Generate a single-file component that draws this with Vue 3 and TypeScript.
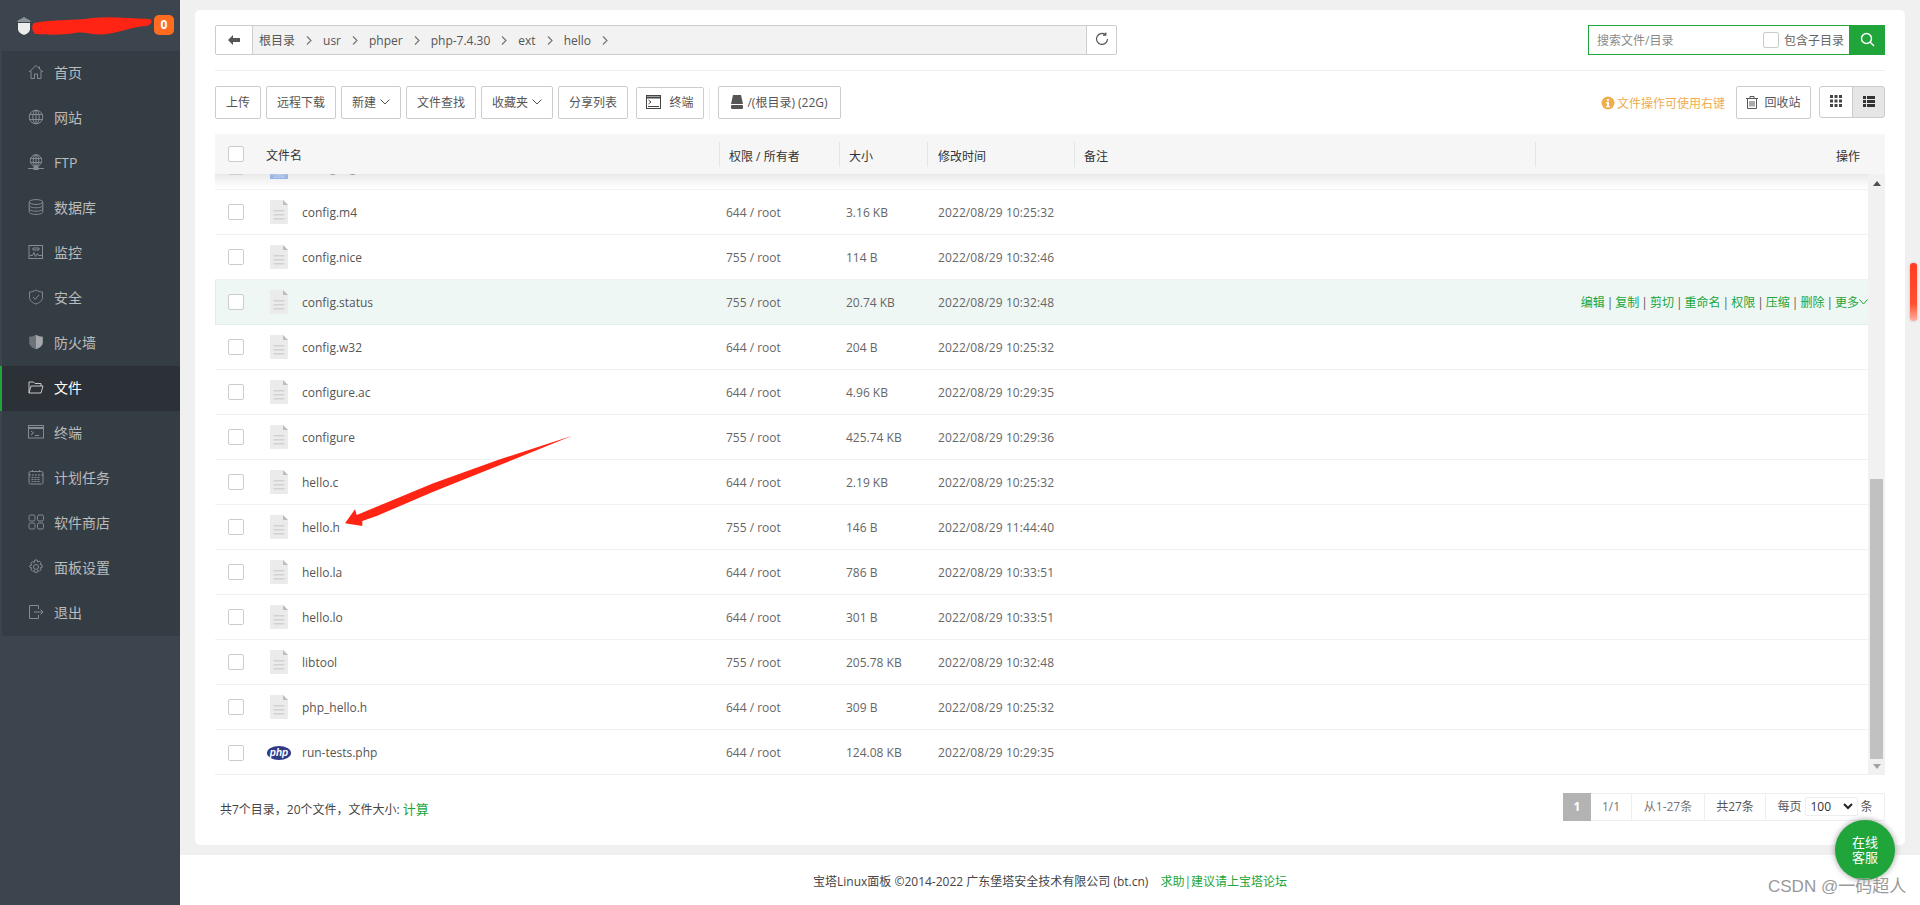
<script setup lang="ts">
interface FileRow {
  name: string
  perm: string
  size: string
  time: string
  kind?: 'log' | 'php'
  hover?: boolean
}

const navItems = [
  { label: '首页', icon: 'home' },
  { label: '网站', icon: 'globe' },
  { label: 'FTP', icon: 'ftp' },
  { label: '数据库', icon: 'db' },
  { label: '监控', icon: 'monitor' },
  { label: '安全', icon: 'shield' },
  { label: '防火墙', icon: 'wall' },
  { label: '文件', icon: 'folder', active: true },
  { label: '终端', icon: 'term' },
  { label: '计划任务', icon: 'cal' },
  { label: '软件商店', icon: 'apps' },
  { label: '面板设置', icon: 'gear' },
  { label: '退出', icon: 'exit' },
]

const crumbs = ['根目录', 'usr', 'phper', 'php-7.4.30', 'ext', 'hello']

const files: FileRow[] = [
  { name: 'config.log', perm: '', size: '', time: '', kind: 'log' },
  { name: 'config.m4', perm: '644 / root', size: '3.16 KB', time: '2022/08/29 10:25:32' },
  { name: 'config.nice', perm: '755 / root', size: '114 B', time: '2022/08/29 10:32:46' },
  { name: 'config.status', perm: '755 / root', size: '20.74 KB', time: '2022/08/29 10:32:48', hover: true },
  { name: 'config.w32', perm: '644 / root', size: '204 B', time: '2022/08/29 10:25:32' },
  { name: 'configure.ac', perm: '644 / root', size: '4.96 KB', time: '2022/08/29 10:29:35' },
  { name: 'configure', perm: '755 / root', size: '425.74 KB', time: '2022/08/29 10:29:36' },
  { name: 'hello.c', perm: '644 / root', size: '2.19 KB', time: '2022/08/29 10:25:32' },
  { name: 'hello.h', perm: '755 / root', size: '146 B', time: '2022/08/29 11:44:40' },
  { name: 'hello.la', perm: '644 / root', size: '786 B', time: '2022/08/29 10:33:51' },
  { name: 'hello.lo', perm: '644 / root', size: '301 B', time: '2022/08/29 10:33:51' },
  { name: 'libtool', perm: '755 / root', size: '205.78 KB', time: '2022/08/29 10:32:48' },
  { name: 'php_hello.h', perm: '644 / root', size: '309 B', time: '2022/08/29 10:25:32' },
  { name: 'run-tests.php', perm: '644 / root', size: '124.08 KB', time: '2022/08/29 10:29:35', kind: 'php' },
]

const rowActions = ['编辑', '复制', '剪切', '重命名', '权限', '压缩', '删除']
</script>

<template>
  <div class="page">
    <aside class="sidebar">
      <div class="brand">
        <svg class="logo" width="20" height="20" viewBox="0 0 20 20">
          <path d="M3 5 10 1l7 4-1 1H4z" fill="#8d9298" />
          <path d="M4 7h12v6c0 3-3 5-6 6-3-1-6-3-6-6z" fill="#eceded" />
        </svg>
        <svg class="scribble" width="122" height="20" viewBox="0 0 122 20">
          <path
            d="M2 7C20 3 42 5 60 2c16-2 36 0 58 1 3 2 2 5-3 7-18 1-24 6-40 8-14 2-22-3-32-1-12 2-24 2-40 1-3-3-4-8-1-11z"
            fill="#ff2413"
          />
        </svg>
        <span class="badge">0</span>
      </div>
      <nav class="nav">
        <a v-for="item in navItems" :key="item.label" class="nav-item" :class="{ active: item.active }">
          <svg class="nav-icon" width="16" height="16" viewBox="0 0 16 16" fill="none" stroke="currentColor" stroke-width="1">
            <template v-if="item.icon === 'home'">
              <path d="M1 8 8 1.5 15 8M3 7v7.5h3.5V10h3v4.5H13V7M11.5 2.5V5" />
            </template>
            <template v-else-if="item.icon === 'globe'">
              <circle cx="8" cy="8" r="6.8" />
              <ellipse cx="8" cy="8" rx="3.2" ry="6.8" />
              <path d="M8 1v14M1.5 5.5h13M1.5 10.5h13" />
            </template>
            <template v-else-if="item.icon === 'ftp'">
              <circle cx="8" cy="6.5" r="5.8" />
              <ellipse cx="8" cy="6.5" rx="2.8" ry="5.8" />
              <path d="M8 1v11M2.5 4.5h11M2.5 8.5h11M0 14.5h16" />
              <rect x="6" y="12.5" width="4" height="3" fill="currentColor" />
            </template>
            <template v-else-if="item.icon === 'db'">
              <ellipse cx="8" cy="3" rx="6.8" ry="2.4" />
              <path d="M1.2 3v10c0 1.4 3 2.4 6.8 2.4s6.8-1 6.8-2.4V3M1.2 6.4c0 1.4 3 2.4 6.8 2.4s6.8-1 6.8-2.4M1.2 9.8c0 1.4 3 2.4 6.8 2.4s6.8-1 6.8-2.4" />
            </template>
            <template v-else-if="item.icon === 'monitor'">
              <rect x="1" y="1.5" width="13.5" height="13" />
              <path d="M2 11.5h2.5l1.5-3 1.5 4 2-3 1 2H14M5 4h6v2H5z" />
            </template>
            <template v-else-if="item.icon === 'shield'">
              <path d="M8 1c2 1.2 4 1.8 6.5 2v5.500c0 3-3 5.500-6.500 6.500-3.500-1-6.500-3.500-6.500-6.500V3C4 2.800 6 2.200 8 1z" />
              <path d="M5 8l2.200 2.300L11.200 5.800" />
            </template>
            <template v-else-if="item.icon === 'wall'">
              <path d="M8 .8c2 1.200 4.200 1.800 6.800 2v5.700c0 3.200-3.200 5.500-6.800 6.700z" fill="#a5a9ad" stroke="none" />
              <path d="M8 .8c-2 1.200-4.200 1.800-6.800 2v5.700c0 3.200 3.200 5.500 6.800 6.700z" fill="#6d7378" stroke="none" />
            </template>
            <template v-else-if="item.icon === 'folder'">
              <path d="M1 14V3h4.500l1.500 1.500h6V7M1 14h12l2-7H3z" />
            </template>
            <template v-else-if="item.icon === 'term'">
              <rect x=".5" y="1.500" width="15" height="12.500" />
              <path d="M.5 4h15" stroke-width="2" />
              <path d="M3 7l2.500 2L3 11M7 11.500h4" />
            </template>
            <template v-else-if="item.icon === 'cal'">
              <rect x="1" y="2.500" width="14" height="12.500" rx="1.500" />
              <path d="M1 6h14M4.500 1v3M11.500 1v3M3.500 8.500h9M3.500 10.500h9M3.500 12.500h9" stroke-dasharray="2 1" />
            </template>
            <template v-else-if="item.icon === 'apps'">
              <rect x="1" y="1" width="6" height="6" rx="1.500" />
              <rect x="9.500" y="1" width="6" height="6" rx="1.500" />
              <rect x="1" y="9" width="6" height="6" rx="1.500" />
              <rect x="9.500" y="9" width="6" height="6" rx="1.500" />
            </template>
            <template v-else-if="item.icon === 'gear'">
              <circle cx="8" cy="8" r="2.500" />
              <path d="M6.800 1h2.400l.5 2 1.700-.9 1.700 1.700-1 1.700 2 .5v2.400l-2 .5 1 1.700-1.700 1.700-1.700-1-.5 2.100H6.800l-.5-2-1.700 1-1.700-1.700 1-1.700-2-.6V6.500l2-.5-1-1.700 1.700-1.700 1.700.9z" />
            </template>
            <template v-else>
              <path d="M10.500 5V1.500h-9v13h9V11M6 8h9M12.500 5.500 15 8l-2.500 2.500" />
            </template>
          </svg>
          <span>{{ item.label }}</span>
        </a>
      </nav>
    </aside>

    <div class="main">
      <section class="card">
        <div class="path-row">
          <div class="path-box">
            <button class="back">
              <svg width="12" height="10" viewBox="0 0 12 10"><path d="M5 0v3h7v4H5v3L0 5z" fill="#555" /></svg>
            </button>
            <div class="crumbs">
              <template v-for="c in crumbs" :key="c">
                <span class="crumb">{{ c }}</span>
                <svg class="crumb-sep" width="6" height="9" viewBox="0 0 6 9" fill="none" stroke="#777" stroke-width="1.200"><path d="M1 .5 5 4.500 1 8.500" /></svg>
              </template>
            </div>
            <button class="refresh">
              <svg width="14" height="14" viewBox="0 0 14 14" fill="none" stroke="#555" stroke-width="1.200">
                <path d="M12.500 7A5.500 5.500 0 1 1 10.500 2.700M10.800 .5v2.700H8" />
              </svg>
            </button>
          </div>
          <div class="search">
            <span class="search-ph">搜索文件/目录</span>
            <span class="check small" />
            <span class="search-sub">包含子目录</span>
            <button class="search-btn">
              <svg width="15" height="15" viewBox="0 0 15 15" fill="none" stroke="#fff" stroke-width="1.500">
                <circle cx="6.500" cy="6.500" r="5" /><path d="M10 10l4 4" />
              </svg>
            </button>
          </div>
        </div>

        <div class="tools">
          <button class="tool w46">上传</button>
          <button class="tool w70">远程下载</button>
          <button class="tool w60">新建<svg class="chev" width="10" height="6" viewBox="0 0 10 6" fill="none" stroke="#555"><path d="M.5.500 5 5 9.500.500" /></svg></button>
          <button class="tool w70">文件查找</button>
          <button class="tool w72">收藏夹<svg class="chev" width="10" height="6" viewBox="0 0 10 6" fill="none" stroke="#555"><path d="M.5.500 5 5 9.500.500" /></svg></button>
          <button class="tool w70">分享列表</button>
          <button class="tool w68 gap-left">
            <svg width="15" height="14" viewBox="0 0 15 14" fill="none" stroke="#444">
              <rect x=".5" y=".5" width="14" height="13" />
              <path d="M.5 2.500h14" stroke-width="2" />
              <path d="M2.500 5 5 7 2.500 9M2 11.500h11" />
            </svg>
            <span>终端</span>
          </button>
          <span class="tool-sep" />
          <button class="tool w123">
            <svg width="12" height="14" viewBox="0 0 12 14"><path d="M2 0h8l2 9H0z" fill="#555" /><rect y="10" width="12" height="4" rx="1" fill="#555" /></svg>
            <span>/(根目录) (22G)</span>
          </button>
          <div class="tools-right">
            <svg class="info" width="14" height="14" viewBox="0 0 14 14">
              <circle cx="7" cy="7" r="6.500" fill="#f0ad4e" />
              <rect x="6" y="3" width="2" height="2" fill="#fff" />
              <path d="M5 6h3v4h1v1.200H5V10h1V7.200H5z" fill="#fff" />
            </svg>
            <span class="hint">文件操作可使用右键</span>
            <button class="tool w75">
              <svg width="12" height="13" viewBox="0 0 12 13" fill="none" stroke="#555">
                <path d="M0 2.500h12M4 2.500V.5h4v2M1.500 2.500v10h9v-10M4 5v5.500M6 5v5.500M8 5v5.500" />
              </svg>
              <span>回收站</span>
            </button>
            <div class="view-toggle">
              <button class="view">
                <svg width="12" height="12" viewBox="0 0 12 12" fill="#444">
                  <rect width="3" height="3" /><rect x="4.500" width="3" height="3" /><rect x="9" width="3" height="3" />
                  <rect y="4.500" width="3" height="3" /><rect x="4.500" y="4.500" width="3" height="3" /><rect x="9" y="4.500" width="3" height="3" />
                  <rect y="9" width="3" height="3" /><rect x="4.500" y="9" width="3" height="3" /><rect x="9" y="9" width="3" height="3" />
                </svg>
              </button>
              <button class="view on">
                <svg width="12" height="11" viewBox="0 0 12 11" fill="#333">
                  <rect width="3" height="3" /><rect x="4" width="8" height="3" />
                  <rect y="4" width="3" height="3" /><rect x="4" y="4" width="8" height="3" />
                  <rect y="8" width="3" height="3" /><rect x="4" y="8" width="8" height="3" />
                </svg>
              </button>
            </div>
          </div>
        </div>

        <div class="table-head">
          <div class="th th-name"><span class="check" /><span class="th-label">文件名</span></div>
          <div class="th">权限 / 所有者</div>
          <div class="th">大小</div>
          <div class="th th-time">修改时间</div>
          <div class="th">备注</div>
          <div class="th th-op">操作</div>
        </div>

        <div class="table-body">
          <div class="rows">
            <div class="rows-inner">
              <div v-for="f in files" :key="f.name" class="row" :class="{ hover: f.hover }">
                <div class="cell-name">
                  <span class="check" />
                  <svg v-if="f.kind === 'php'" class="php-icon" width="24" height="14" viewBox="0 0 24 14">
                    <ellipse cx="12" cy="7" rx="12" ry="7" fill="#2f3a85" />
                    <text x="12" y="10" text-anchor="middle" font-size="10" font-style="italic" font-weight="700" fill="#fff" font-family="'Liberation Sans', sans-serif">php</text>
                  </svg>
                  <svg v-else class="file-icon" width="18" height="24" viewBox="0 0 18 24">
                    <path d="M0 1a1 1 0 0 1 1-1h12l5 5v18a1 1 0 0 1-1 1H1a1 1 0 0 1-1-1z" fill="#ebebeb" />
                    <path d="M13 0l5 5h-5z" fill="#bdbdbd" />
                    <path d="M3.500 10h11v1.500h-11zM3.500 14h11v1.500h-11zM3.500 18h11v1.500h-11z" fill="#d2d2d2" />
                    <rect v-if="f.kind === 'log'" y="17" width="18" height="7" fill="#6f9ef0" />
                    <text v-if="f.kind === 'log'" x="9" y="22.500" text-anchor="middle" font-size="5" fill="#dbe7fb" font-family="'Liberation Sans', sans-serif">LOG</text>
                  </svg>
                  <span class="fname">{{ f.name }}</span>
                </div>
                <div class="cell">{{ f.perm }}</div>
                <div class="cell">{{ f.size }}</div>
                <div class="cell cell-time">{{ f.time }}</div>
                <div class="cell-op">
                  <template v-if="f.hover">
                    <template v-for="a in rowActions" :key="a"><a>{{ a }}</a><i>|</i></template>
                    <a>更多</a>
                    <svg width="9" height="6" viewBox="0 0 9 6" fill="none" stroke="#20a53a"><path d="M.5.500 4.500 5 8.500.500" /></svg>
                  </template>
                </div>
              </div>
            </div>
            <div class="head-shadow" />
          </div>
          <div class="scroll-track">
            <svg class="arrow-up" width="8" height="5" viewBox="0 0 8 5"><path d="M4 0l4 5H0z" fill="#505050" /></svg>
            <div class="scroll-thumb" />
            <svg class="arrow-down" width="8" height="5" viewBox="0 0 8 5"><path d="M4 5 8 0H0z" fill="#a3a3a3" /></svg>
          </div>
        </div>

        <div class="table-foot">
          <div class="summary">共7个目录，20个文件，文件大小: <a>计算</a></div>
          <div class="pager">
            <span class="pg cur">1</span>
            <span class="pg p1">1/1</span>
            <span class="pg p2">从1-27条</span>
            <span class="pg p3">共27条</span>
            <span class="pg p4">每页<span class="select">100<svg width="10" height="7" viewBox="0 0 10 7" fill="none" stroke="#222" stroke-width="2"><path d="M1 1l4 4 4-4" /></svg></span>条</span>
          </div>
        </div>
      </section>

      <footer class="footer">
        <span>宝塔Linux面板 ©2014-2022 广东堡塔安全技术有限公司 (bt.cn)</span>
        <a>求助|建议请上宝塔论坛</a>
      </footer>
    </div>

    <!-- 截图上叠加的标注和悬浮元素 -->
    <svg class="annotation" width="240" height="100" viewBox="0 0 240 100">
      <path d="M2 88.300 12 74.300 13.700 80 90.300 48.300 157 24.300 229.300.7 157 30 90.300 56.700 33.700 81 19.300 86 19.300 91z" fill="#ff2413" />
    </svg>
    <div class="kefu">在线<br />客服</div>
    <div class="page-scroll" />
    <div class="watermark">CSDN @一码超人</div>
  </div>
</template>

<style scoped>
.page {
  position: relative;
  display: flex;
  width: 1920px;
  height: 905px;
  overflow: hidden;
  background: #f0f0f0;
  font-family: "Open Sans", "Noto Sans CJK SC", sans-serif;
  font-size: 12px;
  color: #555;
}

button {
  font-family: inherit;
  cursor: pointer;
}

.sidebar {
  flex: 0 0 180px;
  background: #3c444d;
}

.brand {
  display: flex;
  align-items: center;
  height: 51px;
  padding-left: 14px;
}

.logo {
  flex: none;
}

.scribble {
  flex: none;
  margin: 1px 0 0 -2px;
}

.badge {
  flex: none;
  width: 20px;
  height: 20px;
  margin: -2px 0 0 0;
  border-radius: 5px;
  background: #ff6c1f;
  color: #fff;
  font-size: 12px;
  font-weight: 700;
  line-height: 20px;
  text-align: center;
}

.nav-item {
  display: flex;
  align-items: center;
  height: 45px;
  box-sizing: border-box;
  border-left: 2px solid #3c444d;
  background: #353d44;
  color: #bbb;
  font-size: 14px;
  padding: 0 0 3px 26px;
}

.nav-item.active {
  border-left-color: #20a53a;
  background: #2c3138;
  color: #fff;
}

.nav-icon {
  flex: none;
  margin-right: 10px;
  color: #858b90;
}

.active .nav-icon {
  color: #c8c8c8;
}

.main {
  flex: 1;
  display: flex;
  flex-direction: column;
  min-width: 0;
}

.card {
  display: flex;
  flex-direction: column;
  height: 835px;
  box-sizing: border-box;
  margin: 10px 15px 10px 15px;
  padding: 15px 20px 0;
  background: #fff;
  border-radius: 5px;
}

.path-row {
  display: flex;
  justify-content: space-between;
  height: 30px;
  padding-bottom: 15px;
  border-bottom: 1px solid #eee;
}

.path-box {
  display: flex;
  width: 902px;
  height: 30px;
  box-sizing: border-box;
  border: 1px solid #ccc;
  border-radius: 2px;
  background: #f2f2f2;
}

.back {
  flex: none;
  width: 37px;
  border: 0;
  border-right: 1px solid #ccc;
  background: #fff;
  padding: 0;
}

.crumbs {
  flex: 1;
  display: flex;
  align-items: center;
  padding-left: 6px;
  font-size: 12px;
  color: #555;
}

.crumb-sep {
  margin: 0 11px 0 11px;
}

.refresh {
  flex: none;
  width: 30px;
  border: 0;
  border-left: 1px solid #ccc;
  background: #fff;
  padding: 2px 0 0;
}

.search {
  display: flex;
  align-items: center;
  width: 297px;
  height: 30px;
  box-sizing: border-box;
  border: 1px solid #20a53a;
  padding-left: 8px;
}

.search-ph {
  flex: 1;
  color: #8a8a8a;
}

.search-sub {
  margin: 0 5px;
  color: #666;
}

.search-btn {
  flex: none;
  width: 36px;
  height: 30px;
  margin-right: -1px;
  border: 0;
  background: #20a53a;
  padding: 2px 0 0;
}

.check {
  flex: none;
  box-sizing: border-box;
  width: 16px;
  height: 16px;
  border: 1px solid #ccc;
  border-radius: 2px;
  background: #fff;
}

.tools {
  display: flex;
  align-items: center;
  gap: 5px;
  height: 33px;
  margin-top: 15px;
}

.tool {
  display: flex;
  align-items: center;
  justify-content: center;
  gap: 4px;
  height: 33px;
  box-sizing: border-box;
  padding: 0 0 1px;
  border: 1px solid #ccc;
  border-radius: 2px;
  background: #fff;
  color: #555;
  font-size: 12px;
}

.w46 { width: 46px; }
.w60 { width: 60px; }
.w68 { width: 68px; gap: 8px; }
.w70 { width: 70px; }
.w72 { width: 72px; }
.w75 { width: 75px; gap: 6px; }
.w123 { width: 123px; }

.gap-left {
  margin-left: 3px;
  height: 32px;
}

.tool-sep {
  width: 1px;
  height: 32px;
  background: #eee;
  margin: 0 3px 0 0;
}

.tools-right {
  display: flex;
  align-items: center;
  margin-left: auto;
}

.info {
  margin-right: 2px;
}

.hint {
  margin-right: 11px;
  color: #f0ad4e;
}

.view-toggle {
  display: flex;
  margin-left: 8px;
  height: 32px;
  margin-top: -1px;
}

.view {
  width: 34px;
  padding: 0;
  border: 1px solid #ccc;
  background: #fff;
  border-radius: 3px 0 0 3px;
}

.view.on {
  width: 33px;
  margin-left: -1px;
  background: #e6e6e6;
  border-radius: 0 3px 3px 0;
}

.table-head {
  display: grid;
  grid-template-columns: 504px 120px 88px 147px 461px 1fr;
  align-items: center;
  height: 40px;
  margin-top: 15px;
  background: #f6f6f6;
  color: #333;
  font-size: 12px;
  flex: none;
}

.th {
  height: 25px;
  line-height: 29px;
  padding-left: 9px;
  border-left: 1px solid #e5e5e5;
}

.th-time {
  padding-left: 10px;
}

.th-name {
  display: flex;
  align-items: center;
  border-left: 0;
  padding-left: 13px;
}

.th-label {
  margin-left: 22px;
  padding-top: 3px;
}

.th-op {
  text-align: right;
  padding-right: 25px;
}

.table-body {
  display: flex;
  height: 601px;
  flex: none;
}

.rows {
  position: relative;
  flex: 1;
  overflow: hidden;
  border-bottom: 1px solid #eee;
}

/* 列表被滚动过，第一行只露出底部 */
.rows-inner {
  margin-top: -29px;
}

.head-shadow {
  position: absolute;
  top: 0;
  left: 0;
  right: 0;
  height: 14px;
  background: linear-gradient(to bottom, rgba(215, 215, 215, 0.55), rgba(255, 255, 255, 0));
}

.row {
  display: grid;
  grid-template-columns: 504px 120px 88px 147px 1fr;
  align-items: center;
  height: 45px;
  box-sizing: border-box;
  border-bottom: 1px solid #f1f1f1;
  color: #666;
}

.row:last-child {
  border-bottom: 0;
}

.row.hover {
  background: #eff7f5;
  border-bottom-color: #deeeea;
  box-shadow: inset 1px 0 0 #deeeea;
}

.cell-name {
  display: flex;
  align-items: center;
  padding-left: 13px;
}

.file-icon {
  flex: none;
  margin-left: 26px;
}

.php-icon {
  flex: none;
  margin: 0 -3px 0 23px;
}

.fname {
  margin-left: 14px;
  color: #555;
}

.cell {
  padding-left: 7px;
}

.cell-time {
  padding-left: 11px;
  letter-spacing: 0.1px;
}

.cell-op {
  display: flex;
  align-items: center;
  justify-content: flex-end;
  color: #20a53a;
}

.cell-op i {
  margin: 0 2px;
  font-style: normal;
  color: #555;
}

.scroll-track {
  position: relative;
  flex: 0 0 17px;
  background: #f1f1f1;
  display: flex;
  flex-direction: column;
  align-items: center;
}

.arrow-up {
  margin-top: 7px;
}

.scroll-thumb {
  width: 13px;
  height: 280px;
  margin-top: 293px;
  background: #c1c1c1;
}

.arrow-down {
  margin-top: 5px;
}

.table-foot {
  display: flex;
  justify-content: space-between;
  align-items: flex-start;
  padding-top: 18px;
}

.summary {
  padding: 6px 0 0 5px;
  color: #444;
}

.summary a {
  color: #20a53a;
  font-size: 13px;
}

.pager {
  display: flex;
  height: 28px;
}

.pg {
  display: flex;
  align-items: center;
  justify-content: center;
  box-sizing: border-box;
  border: 1px solid #eee;
  border-left: 0;
  height: 28px;
  padding-bottom: 2px;
  color: #777;
}

.pg.cur {
  width: 28px;
  background: #b3b3b3;
  border: 0;
  color: #fff;
  font-weight: 700;
}

.p1 { width: 41px; }
.p2 { width: 73px; }
.p3 { width: 61px; color: #555; }
.p4 { width: 119px; color: #555; }

.select {
  display: flex;
  align-items: center;
  justify-content: space-between;
  box-sizing: border-box;
  width: 53px;
  height: 19px;
  margin: 0 3px 0 3px;
  padding: 0 4px 0 5px;
  border: 1px solid #eee;
  border-radius: 2px;
  color: #333;
}

.footer {
  display: flex;
  align-items: center;
  justify-content: center;
  gap: 12px;
  height: 50px;
  padding-top: 1px;
  box-sizing: border-box;
  background: #fff;
  color: #444;
  font-size: 12px;
}

.footer a {
  color: #20a53a;
}

.annotation {
  position: absolute;
  left: 343px;
  top: 435px;
}

.kefu {
  position: absolute;
  left: 1835px;
  top: 820px;
  width: 60px;
  height: 60px;
  box-sizing: border-box;
  padding-top: 15px;
  border-radius: 50%;
  background: #20a53a;
  box-shadow: 0 0 6px rgba(0, 0, 0, 0.4);
  color: #fff;
  font-size: 13px;
  font-weight: 400;
  line-height: 15px;
  text-align: center;
}

.page-scroll {
  position: absolute;
  left: 1910px;
  top: 263px;
  width: 7px;
  height: 58px;
  border-radius: 3px;
  background: linear-gradient(to bottom, #ff3c20 0%, #ff5030 70%, #ffb0a0 100%);
  box-shadow: 0 0 3px rgba(0, 0, 0, 0.2);
}

.watermark {
  position: absolute;
  left: 1768px;
  top: 876px;
  color: #999;
  font-family: "Liberation Sans", "Noto Sans CJK SC", sans-serif;
  font-size: 17px;
  line-height: 22px;
  white-space: nowrap;
}
</style>

<style>
html,
body {
  margin: 0;
  padding: 0;
}
</style>
